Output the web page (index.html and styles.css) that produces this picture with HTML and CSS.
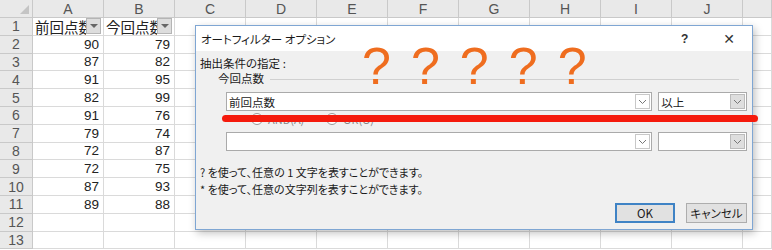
FILE: index.html
```html
<!DOCTYPE html>
<html lang="ja">
<head>
  <meta charset="UTF-8">
  <title>オートフィルター オプション</title>
  <link rel="stylesheet" href="styles.css">
</head>
<body>
  <div class="sheet" id="sheet"></div>

  <div class="dialog">
    <div class="title-bar">
      <span class="title">オートフィルター オプション</span>
      <span class="help">?</span>
      <span class="close">&#x2715;</span>
    </div>
    <div class="dialog-body">
      <div class="caption">抽出条件の指定 :</div>
      <div class="group-label"><span>今回点数</span><span class="group-line"></span></div>

      <div class="combo-row">
        <div class="combo wide"><span class="combo-text">前回点数</span><span class="drop"><svg width="9" height="6" viewBox="0 0 9 6"><path d="M1 1 L4.5 4.5 L8 1" fill="none" stroke="#777" stroke-width="1"/></svg></span></div>
        <div class="combo narrow"><span class="combo-text">以上</span><span class="drop filled"><svg width="9" height="6" viewBox="0 0 9 6"><path d="M1 1 L4.5 4.5 L8 1" fill="none" stroke="#777" stroke-width="1"/></svg></span></div>
      </div>

      <div class="radio-row">
        <span class="radio"></span><span class="radio-label">AND(A)</span>
        <span class="radio"></span><span class="radio-label">OR(O)</span>
      </div>

      <div class="combo-row second">
        <div class="combo wide"><span class="combo-text"></span><span class="drop"><svg width="9" height="6" viewBox="0 0 9 6"><path d="M1 1 L4.5 4.5 L8 1" fill="none" stroke="#777" stroke-width="1"/></svg></span></div>
        <div class="combo narrow"><span class="combo-text"></span><span class="drop filled"><svg width="9" height="6" viewBox="0 0 9 6"><path d="M1 1 L4.5 4.5 L8 1" fill="none" stroke="#777" stroke-width="1"/></svg></span></div>
      </div>

      <div class="hints">
        <div>? を使って、任意の 1 文字を表すことができます。</div>
        <div>* を使って、任意の文字列を表すことができます。</div>
      </div>

      <div class="buttons">
        <button class="btn primary">OK</button>
        <button class="btn">キャンセル</button>
      </div>
    </div>
  </div>

  <div class="marks">
    <span>?</span><span>?</span><span>?</span><span>?</span><span>?</span>
  </div>
  <div class="strike"></div>

  <script>
    const colA = [90, 87, 91, 82, 91, 79, 72, 72, 87, 89];
    const colB = [79, 82, 95, 99, 76, 74, 87, 75, 93, 88];
    const letters = ['A', 'B', 'C', 'D', 'E', 'F', 'G', 'H', 'I', 'J', ''];
    const sheet = document.getElementById('sheet');

    function cell(cls, text) {
      const div = document.createElement('div');
      div.className = cls;
      if (text !== undefined) div.textContent = text;
      sheet.appendChild(div);
      return div;
    }

    // header row
    cell('hd corner');
    letters.forEach(l => cell('hd col', l));

    for (let r = 1; r <= 13; r++) {
      cell('hd row', r);
      for (let c = 0; c < letters.length; c++) {
        const td = cell('td');
        if (r === 1 && c < 2) {
          td.classList.add('filter');
          td.innerHTML = '<span class="ft">' + (c === 0 ? '前回点数' : '今回点数') +
            '</span><span class="fbtn"></span>';
        } else if (r >= 2 && r <= 11 && c < 2) {
          td.classList.add('num');
          td.textContent = c === 0 ? colA[r - 2] : colB[r - 2];
        }
      }
    }
  </script>
</body>
</html>
```

FILE: styles.css
```css
body {
  margin: 0;
  background: #ffffff;
  font-family: "Liberation Sans", Arial, sans-serif;
  overflow: hidden;
  position: relative;
  width: 772px;
  height: 250px;
}
.sheet {
  display: grid;
  grid-template-columns: 33px repeat(10, 71px) 1fr;
  grid-template-rows: 18px;
  grid-auto-rows: 17.8px;
}
.hd {
  background: #e9e9e9;
  color: #555;
  font-size: 14px;
  border-right: 1px solid #c9c9c9;
  border-bottom: 1px solid #c9c9c9;
  box-sizing: border-box;
  display: flex;
  align-items: center;
  justify-content: center;
}
.corner {
  position: relative;
}
.corner::after {
  content: "";
  position: absolute;
  right: 3px;
  bottom: 3px;
  border-left: 9px solid transparent;
  border-bottom: 9px solid #c4c4c4;
}
.td {
  border-right: 1px solid #dadada;
  border-bottom: 1px solid #dadada;
  box-sizing: border-box;
  font-size: 13.5px;
  color: #222;
  display: flex;
  align-items: center;
  overflow: hidden;
}
.num {
  justify-content: flex-end;
  padding-right: 4px;
}
.filter {
  padding-left: 2px;
}
.ft {
  flex: 1;
  overflow: hidden;
  white-space: nowrap;
  font-family: "Noto Sans CJK JP", sans-serif;
  font-size: 14.5px;
  line-height: 17px;
}
.fbtn {
  flex: none;
  width: 15px;
  height: 16px;
  box-sizing: border-box;
  background: #dddddd;
  border: 1px solid #b5b5b5;
  position: relative;
  margin-right: 2px;
}
.fbtn::after {
  content: "";
  position: absolute;
  left: 3px;
  top: 5px;
  border-left: 4px solid transparent;
  border-right: 4px solid transparent;
  border-top: 4px solid #666;
}

.dialog {
  position: absolute;
  left: 195px;
  top: 25px;
  width: 558px;
  height: 205px;
  box-sizing: border-box;
  border: 1px solid #7fa6d3;
  background: #f0f0f0;
  box-shadow: 2px 3px 8px rgba(0, 0, 0, 0.25);
  font-family: "Noto Sans CJK JP", sans-serif;
  font-feature-settings: "palt";
  font-size: 11px;
  color: #1a1a1a;
  display: flex;
  flex-direction: column;
}
.title-bar {
  background: #ffffff;
  height: 25px;
  display: flex;
  align-items: center;
  padding-left: 5px;
}
.title {
  flex: 1;
  font-size: 11.5px;
}
.help {
  font-family: "Liberation Sans", sans-serif;
  font-weight: bold;
  font-size: 12px;
  color: #333;
  margin-right: 35px;
}
.close {
  font-family: "DejaVu Sans", sans-serif;
  font-size: 14px;
  color: #333;
  margin-right: 17px;
}
.dialog-body {
  flex: 1;
  display: flex;
  flex-direction: column;
  padding: 4px 5px 6px 4px;
}
.caption {
  font-size: 11.5px;
  line-height: 16px;
}
.group-label {
  display: flex;
  align-items: center;
  padding-left: 18px;
  line-height: 14px;
  font-size: 11.5px;
}
.group-line {
  flex: 1;
  height: 1px;
  background: #d0d0d0;
  margin: 2px 8px 0 6px;
}
.combo-row {
  display: flex;
  gap: 6px;
  padding-left: 26px;
  margin-top: 7px;
  height: 19px;
}
.combo-row.second {
  margin-top: 5px;
}
.combo {
  background: #ffffff;
  border: 1px solid #aaaaaa;
  box-sizing: border-box;
  display: flex;
  align-items: center;
}
.combo.wide {
  width: 427px;
}
.combo.narrow {
  width: 89px;
}
.combo-text {
  flex: 1;
  padding-left: 2px;
  font-size: 11.5px;
}
.drop {
  width: 15px;
  height: 15px;
  margin-right: 1px;
  box-sizing: border-box;
  display: flex;
  align-items: center;
  justify-content: center;
  border: 1px solid #c8c8c8;
}
.drop.filled {
  background: #dedede;
  border-color: #bbbbbb;
}
.radio-row {
  display: flex;
  align-items: center;
  height: 16px;
  margin-top: 0;
  padding-left: 51px;
  color: #888;
}
.radio {
  width: 10px;
  height: 10px;
  border: 1px solid #999;
  border-radius: 50%;
  background: #fff;
  margin-right: 5px;
}
.radio-label {
  margin-right: 22px;
  font-size: 11px;
}
.hints {
  margin-top: 13px;
  line-height: 17px;
  font-size: 11px;
}
.buttons {
  margin-top: auto;
  display: flex;
  justify-content: flex-end;
  gap: 11px;
}
.btn {
  height: 20px;
  font-family: "Noto Sans CJK JP", sans-serif;
  font-feature-settings: "palt";
  font-size: 11.5px;
  background: #e1e1e1;
  border: 1px solid #adadad;
  padding: 0;
  color: #1a1a1a;
  width: 61px;
  line-height: 16px;
}
.btn.primary {
  border: 2px solid #3f83c5;
  width: 60px;
}

.marks {
  position: absolute;
  left: 362px;
  top: 40px;
  display: flex;
  gap: 20px;
  font-family: "Liberation Sans", sans-serif;
  font-size: 52px;
  line-height: 52px;
  color: #ef6d1f;
}
.strike {
  position: absolute;
  left: 222px;
  top: 115px;
  width: 536px;
  height: 7px;
  border-radius: 4px;
  background: #f51a0c;
}
```
